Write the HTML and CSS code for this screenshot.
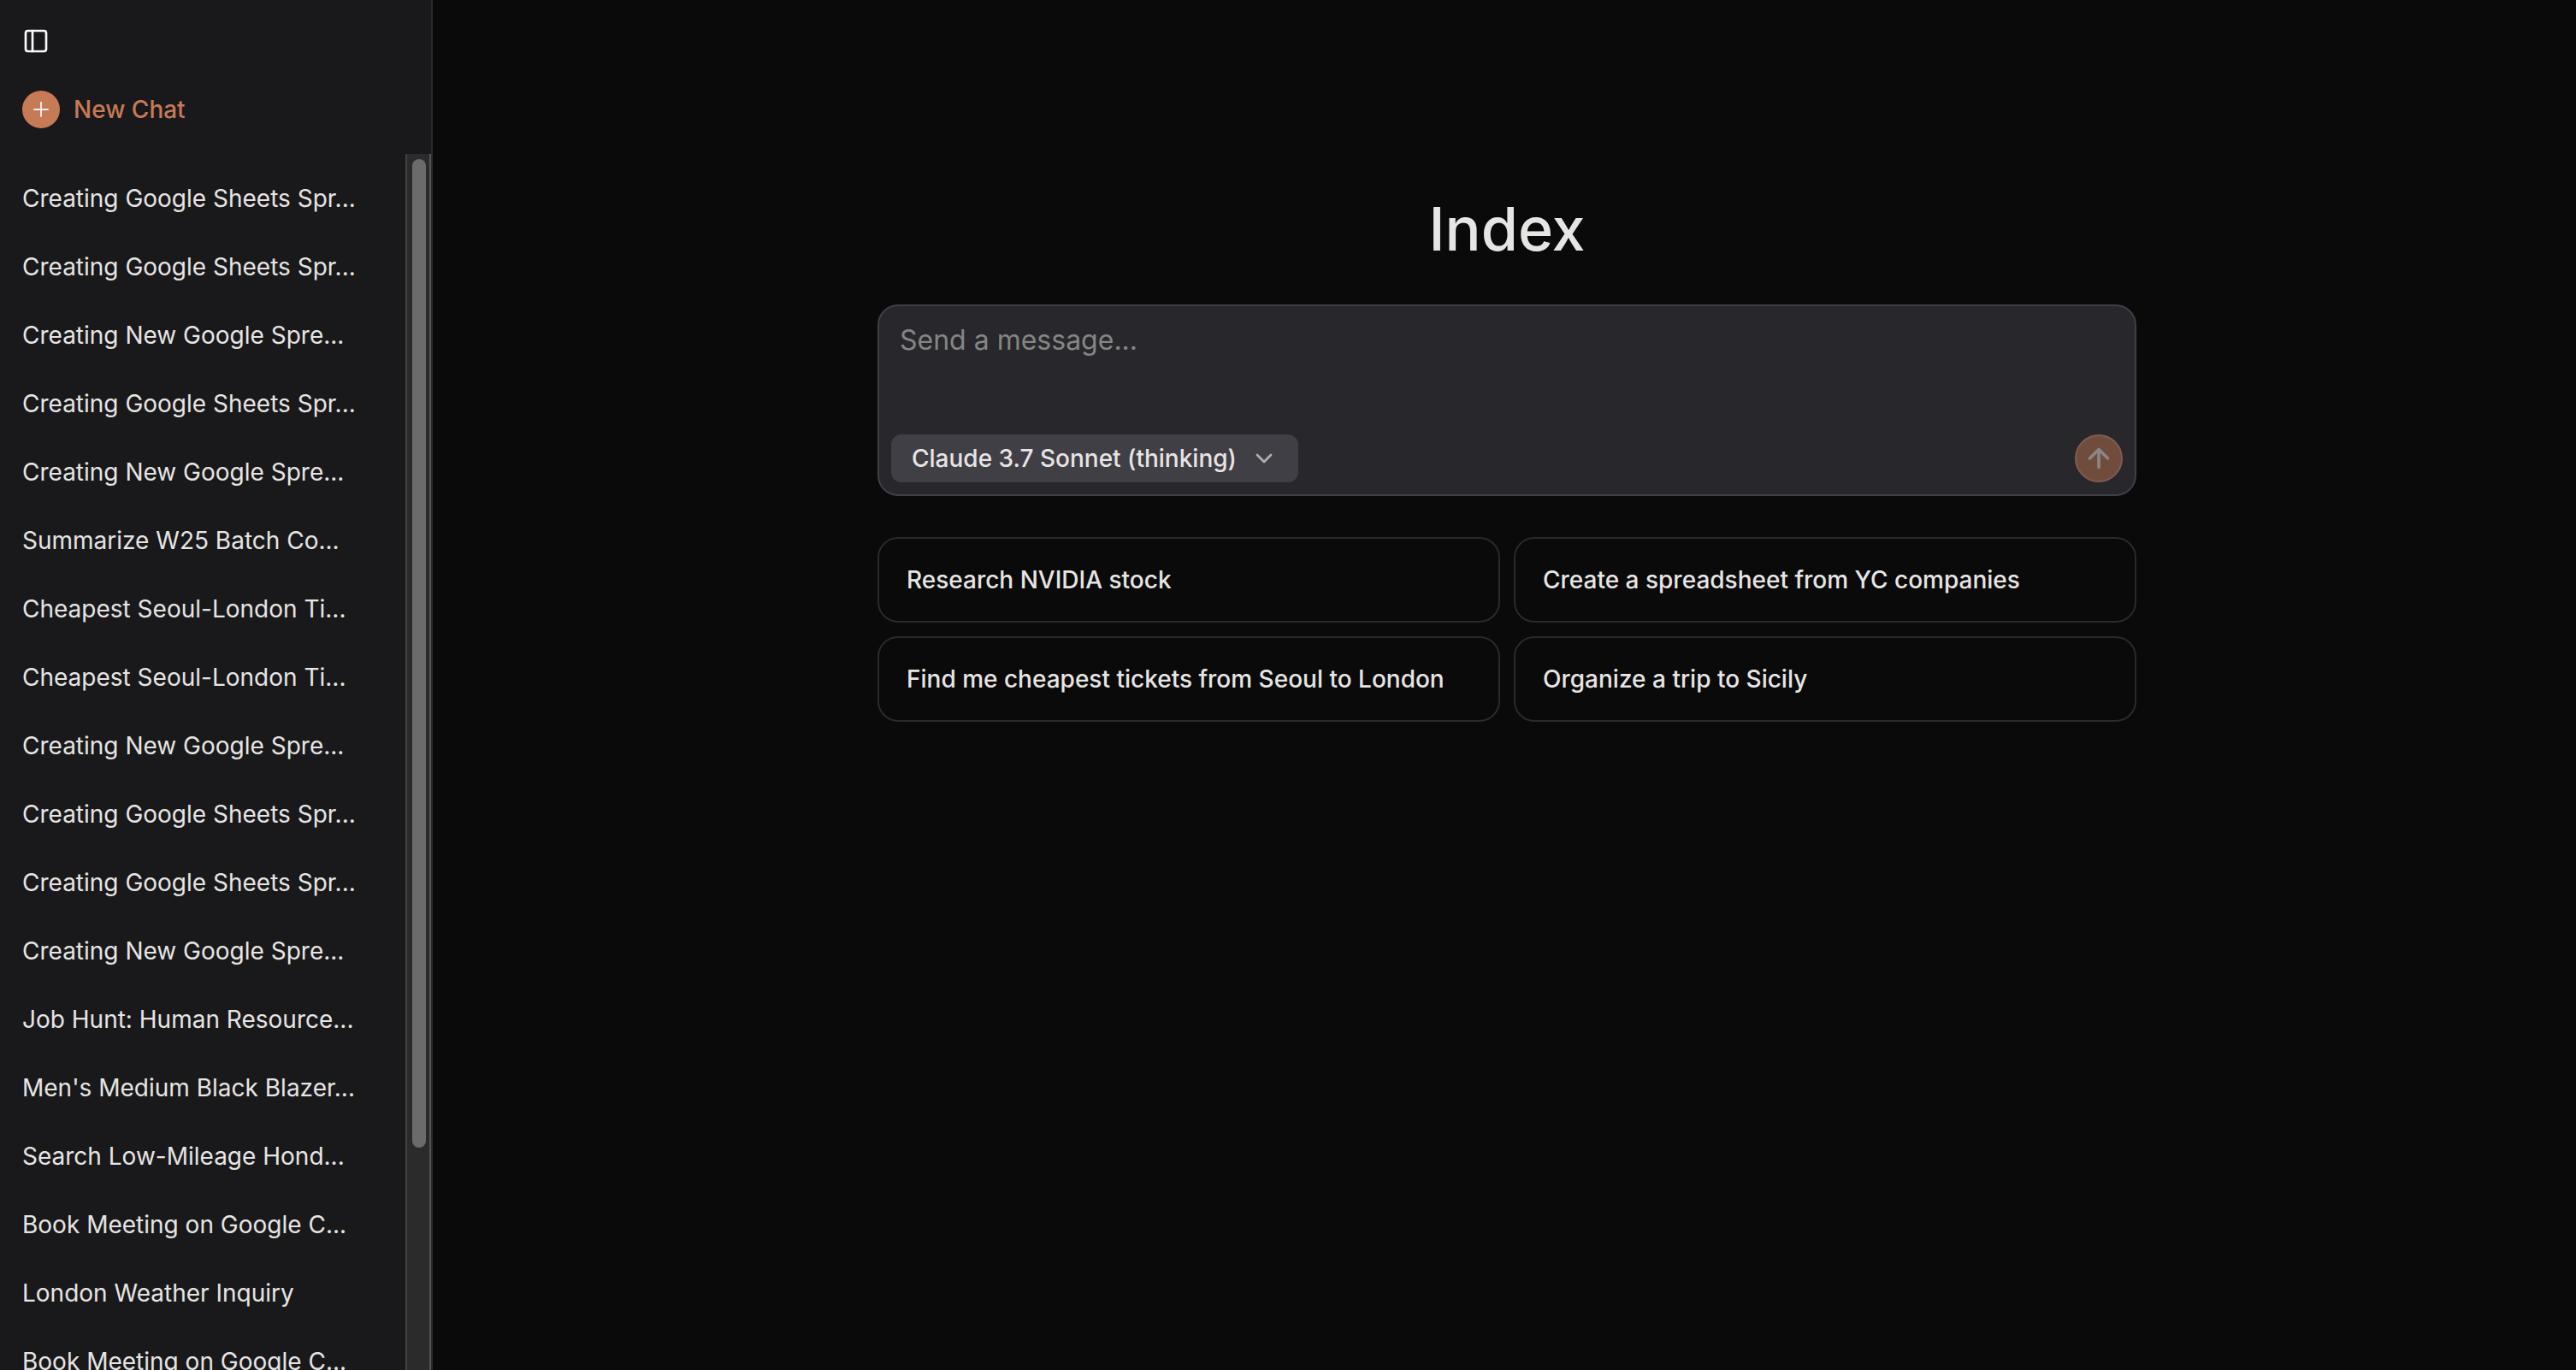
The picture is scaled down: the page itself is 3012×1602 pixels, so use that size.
FILE: index.html
```html
<!DOCTYPE html>
<html lang="en">
<head>
<meta charset="utf-8">
<meta name="viewport" content="width=device-width, initial-scale=1">
<title>Index</title>
<link rel="stylesheet" href="styles.css">
</head>
<body>
<div class="app">
  <aside class="sidebar">
    <header class="sidebar-header">
      <button class="icon-button" type="button" aria-label="Toggle sidebar">
        <svg viewBox="0 0 24 24" class="icon-panel" aria-hidden="true"><rect x="3" y="3" width="18" height="18" rx="2"/><path d="M9 3v18"/></svg>
      </button>
      <button class="new-chat" type="button">
        <span class="new-chat-badge"><svg viewBox="0 0 24 24" class="icon-plus" aria-hidden="true"><path d="M4 12h16M12 4v16"/></svg></span>
        New Chat
      </button>
    </header>
    <div class="history">
      <nav class="chat-list" aria-label="Chats">
        <a href="#" class="chat-link">Creating Google Sheets Spr...</a>
        <a href="#" class="chat-link">Creating Google Sheets Spr...</a>
        <a href="#" class="chat-link">Creating New Google Spre...</a>
        <a href="#" class="chat-link">Creating Google Sheets Spr...</a>
        <a href="#" class="chat-link">Creating New Google Spre...</a>
        <a href="#" class="chat-link">Summarize W25 Batch Co...</a>
        <a href="#" class="chat-link">Cheapest Seoul-London Ti...</a>
        <a href="#" class="chat-link">Cheapest Seoul-London Ti...</a>
        <a href="#" class="chat-link">Creating New Google Spre...</a>
        <a href="#" class="chat-link">Creating Google Sheets Spr...</a>
        <a href="#" class="chat-link">Creating Google Sheets Spr...</a>
        <a href="#" class="chat-link">Creating New Google Spre...</a>
        <a href="#" class="chat-link">Job Hunt: Human Resource...</a>
        <a href="#" class="chat-link">Men's Medium Black Blazer...</a>
        <a href="#" class="chat-link">Search Low-Mileage Hond...</a>
        <a href="#" class="chat-link">Book Meeting on Google C...</a>
        <a href="#" class="chat-link">London Weather Inquiry</a>
        <a href="#" class="chat-link">Book Meeting on Google C...</a>
      </nav>
      <div class="scroll-track" aria-hidden="true"><div class="scroll-thumb"></div></div>
    </div>
  </aside>
  <main class="main">
    <div class="content">
      <h1 class="title">Index</h1>
      <form class="composer">
        <textarea class="message" rows="2" placeholder="Send a message..." aria-label="Message"></textarea>
        <div class="composer-bar">
          <div class="model">
            <select class="model-select" aria-label="Model"><option>Claude 3.7 Sonnet (thinking)</option></select>
            <svg viewBox="0 0 24 24" class="icon-chevron" aria-hidden="true"><path d="m6 9 6 6 6-6"/></svg>
          </div>
          <button class="send" type="submit" aria-label="Send">
            <svg viewBox="0 0 24 24" class="icon-arrow" aria-hidden="true"><path d="m5 12 7-7 7 7M12 19V5"/></svg>
          </button>
        </div>
      </form>
      <div class="suggestions">
        <button class="suggestion" type="button">Research NVIDIA stock</button>
        <button class="suggestion" type="button">Create a spreadsheet from YC companies</button>
        <button class="suggestion" type="button">Find me cheapest tickets from Seoul to London</button>
        <button class="suggestion" type="button">Organize a trip to Sicily</button>
      </div>
    </div>
  </main>
</div>
</body>
</html>
```
FILE: styles.css
```css
*, *::before, *::after { box-sizing: border-box; }

body {
  margin: 0;
  background: #0a0a0a;
  color: #e7e5e4;
  font-family: Inter, "Liberation Sans", sans-serif;
  font-size: 28px;
  line-height: 40px;
}

button, select, textarea {
  margin: 0;
  padding: 0;
  border: 0;
  background: none;
  color: inherit;
  font: inherit;
}

svg {
  display: block;
  fill: none;
  stroke: currentColor;
  stroke-width: 2;
  stroke-linecap: round;
  stroke-linejoin: round;
}

.app {
  display: flex;
  gap: 6px;
  height: 100vh;
  overflow: hidden;
}

/* Sidebar */
.sidebar {
  display: flex;
  flex-direction: column;
  flex: none;
  width: 506px;
  border-right: 2px solid #2a2a2d;
  background: #19191b;
}

.sidebar-header {
  display: flex;
  flex-direction: column;
  align-items: flex-start;
  gap: 42px;
  padding: 32px 26px 30px;
}

.icon-button { color: #fafafa; }
.icon-panel { width: 32px; height: 32px; }

.new-chat {
  display: flex;
  align-items: center;
  gap: 16px;
  color: #c67a56;
  font-weight: 500;
}

.new-chat-badge {
  display: grid;
  place-items: center;
  width: 44px;
  height: 44px;
  border-radius: 50%;
  background: #c67a56;
  color: #f0eeee;
}

.icon-plus { width: 24px; height: 24px; }

.history {
  display: flex;
  flex: 1;
  min-height: 0;
}

.chat-list {
  flex: 1;
  min-width: 0;
  padding: 12px 26px;
  overflow: hidden;
}

.chat-link {
  display: block;
  padding: 20px 0;
  color: #e7e5e4;
  text-decoration: none;
  white-space: nowrap;
}

.scroll-track {
  width: 30px;
  padding: 6px;
  border: solid #424242;
  border-width: 0 2px;
  border-right-color: #545454;
  background: #2b2b2b;
}

.scroll-thumb {
  width: 16px;
  height: 82%;
  border-radius: 8px;
  background: #6b6b6b;
}

/* Main */
.main {
  flex: 1;
  padding: 224px 32px 32px;
}

.content {
  display: flex;
  flex-direction: column;
  max-width: 1472px;
  margin: 0 auto;
}

.title {
  margin: 0 0 44px;
  font-size: 70px;
  font-weight: 500;
  line-height: 88px;
  text-align: center;
}

.composer {
  margin-bottom: 48px;
  border: 2px solid #3f3f46;
  border-radius: 24px;
  background: #28272c;
}

.message {
  display: block;
  width: 100%;
  height: 150px;
  padding: 16px 24px;
  outline: 0;
  resize: none;
  font-size: 32px;
  line-height: 48px;
}

.message::placeholder { color: #858585; opacity: 1; }

.composer-bar {
  display: flex;
  justify-content: space-between;
  padding: 0 14px 14px;
}

.model {
  display: grid;
  align-items: center;
}

.model-select, .icon-chevron { grid-area: 1 / 1; }

.model-select {
  width: 476px;
  height: 56px;
  padding: 0 64px 0 24px;
  border-radius: 12px;
  background: #403f45;
  font-weight: 500;
  appearance: none;
}

.icon-chevron {
  width: 32px;
  height: 32px;
  margin-right: 24px;
  justify-self: end;
  color: #b1afb1;
  pointer-events: none;
}

.send {
  display: grid;
  place-items: center;
  width: 56px;
  height: 56px;
  border: 2px solid #7d5d51;
  border-radius: 50%;
  background: #704c3d;
  color: #8a8687;
}

.icon-arrow { width: 36px; height: 36px; stroke-width: 2.4; }

.suggestions {
  display: grid;
  grid-template-columns: repeat(2, 1fr);
  gap: 16px;
}

.suggestion {
  height: 100px;
  padding: 0 32px;
  border: 2px solid #2a2a2d;
  border-radius: 24px;
  font-weight: 500;
  text-align: left;
}
```
